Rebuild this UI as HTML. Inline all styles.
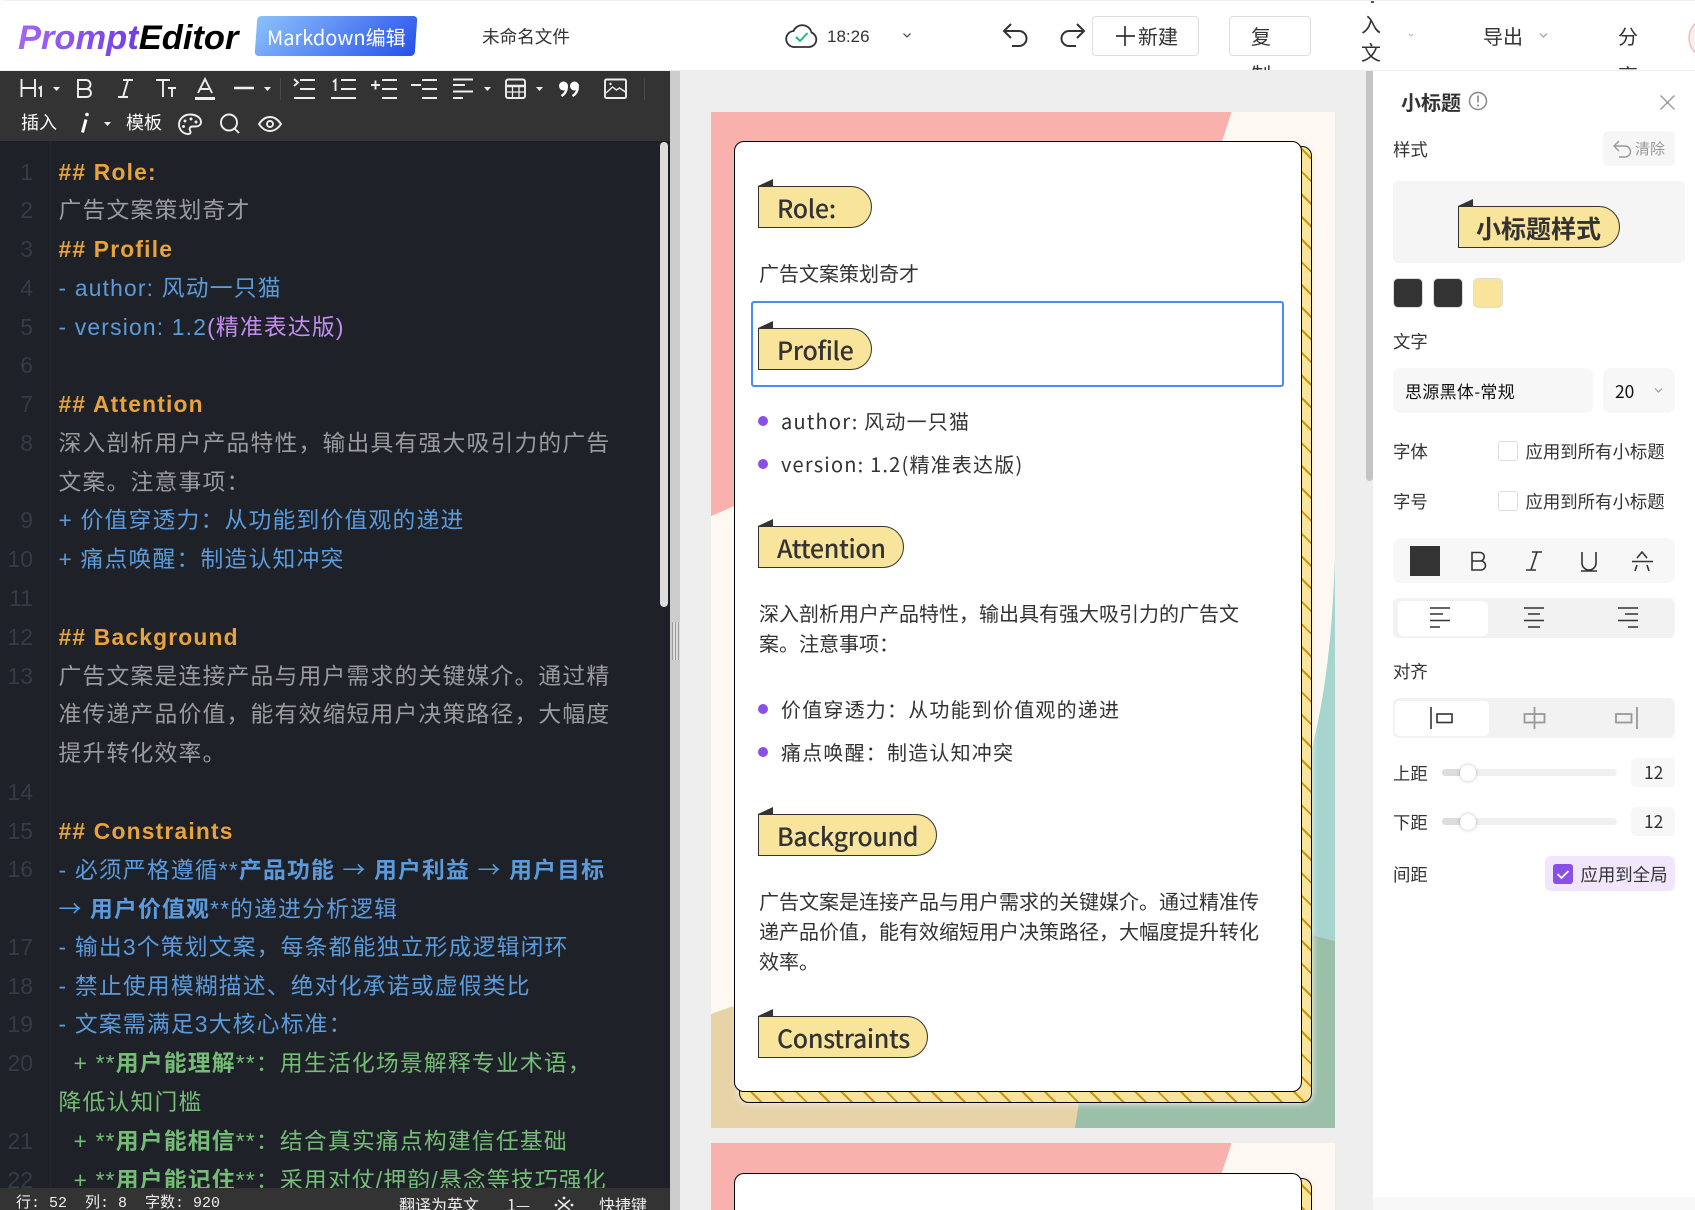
<!DOCTYPE html>
<html lang="zh"><head><meta charset="utf-8"><title>PromptEditor</title>
<style>
*{box-sizing:border-box}
html,body{margin:0;padding:0;width:1695px;height:1210px;overflow:hidden;background:#fff}
body{position:relative;font-family:"Liberation Sans","Noto Sans CJK SC",sans-serif;color:#333}
.a{position:absolute}
.t{position:absolute;white-space:pre;line-height:30px;height:30px}
.n{font-family:"Noto Sans CJK SC","Liberation Sans",sans-serif}
#hdr{left:0;top:0;width:1695px;height:71px;background:#fff;border-top:1px solid #eee;border-bottom:1px solid #eee;overflow:hidden;z-index:5;border-top-left-radius:6px}
.btn{position:absolute;border:1px solid #ddd;border-radius:4px;background:#fff}
#ed{left:0;top:141px;width:670px;height:1047px;background:#1e2127;overflow:hidden}
#ed .l{height:38.77px;line-height:38.77px;white-space:pre;font-size:22.8px;letter-spacing:1.2px;color:#999c9f}
#code{position:absolute;left:58.5px;top:11.6px;width:600px}
#nums{position:absolute;left:0;top:11.6px;width:33px;text-align:right}
#nums .l{color:#363b43;letter-spacing:0;font-size:23px}
.o{color:#e8a33d!important;font-weight:700}
.b{color:#5b9bdc!important}
.g{color:#75bd77!important}
.p{color:#c48ef0}
.ar{font-family:"Noto Sans CJK SC",sans-serif;font-weight:400}
#ed b{font-weight:700}
.poster{position:absolute;left:711px;width:624px;height:1016px;overflow:hidden}
.hatch{position:absolute;left:28px;top:34px;width:573px;height:957px;border:1px solid #000;border-radius:10px;background:repeating-linear-gradient(45deg,#f9e49b 0,#f9e49b 14px,#c9960c 14px,#c9960c 16px);box-shadow:0 0 6px 1px rgba(238,238,238,1)}
.card{position:absolute;left:23px;top:29px;width:567.5px;height:951px;border:1px solid #000;border-radius:10px;background:#fff}
.h{position:absolute;height:42px;background:#f9e49b;border:1px solid #333;border-radius:0 21px 21px 0;font:500 25px/43px "Noto Sans CJK SC","Liberation Sans",sans-serif;letter-spacing:-.35px;color:#333;padding-left:18px;white-space:pre}
.h:before{content:"";position:absolute;left:-1px;top:-8px;border-style:solid;border-width:0 0 7px 15px;border-color:transparent transparent #333 transparent}
.c{position:absolute;white-space:pre;font:20px/30px "Noto Sans CJK SC","Liberation Sans",sans-serif;color:#333}
.li{letter-spacing:1.2px}
.dot{position:absolute;width:10px;height:10px;border-radius:50%;background:#8b4fe8}
#pn{left:1373px;top:71px;width:322px;height:1139px;background:#fff}
.lbl{position:absolute;white-space:pre;font:17.4px/30px "Noto Sans CJK SC","Liberation Sans",sans-serif;color:#333}
.box{position:absolute}
.cb{position:absolute;width:20px;height:20px;border:1px solid #ddd;border-radius:3px;background:#fff}
.thumb{position:absolute;width:16px;height:16px;border-radius:50%;background:#fff;box-shadow:0 0 4px rgba(0,0,0,.25)}
</style></head><body>

<div class="a" style="left:670px;top:71px;width:10px;height:1139px;background:#ccc"></div>
<div class="a" style="left:672px;top:622px;width:8px;height:38px;background:repeating-linear-gradient(90deg,#999 0,#999 1px,#ddd 1px,#ddd 3px)"></div>
<div class="a" style="left:680px;top:71px;width:693px;height:1139px;background:#eee"></div>
<div class="a" style="left:1366px;top:71px;width:7px;height:410px;background:#c4c4c4;border-radius:0 0 4px 4px"></div>

<!-- Header -->
<div id="hdr" class="a">
  <div class="t" style="left:18px;top:20px;height:34px;line-height:34px;font:italic 700 34.5px/34px 'Liberation Sans',sans-serif;color:#000"><span style="background:linear-gradient(90deg,#a566f7,#6f3ee8);-webkit-background-clip:text;background-clip:text;color:transparent">Prompt</span>Editor</div>
  <div class="a" style="left:256px;top:15px;width:160px;height:40px;border-radius:4px;transform:skewX(-4deg);background:linear-gradient(135deg,#8cc2fb,#2650ec)"></div>
  <div class="t n" style="left:267px;top:21px;font-size:20px;color:#fff">Markdown编辑</div>
  <div class="t n" style="left:482px;top:21px;font-size:17.6px;color:#333">未命名文件</div>
  <div class="btn" style="left:1092px;top:15px;width:107px;height:40px"></div>
  <div class="btn" style="left:1229px;top:15px;width:82px;height:40px"></div>
  <svg class="a" style="left:0;top:-1px" width="1695" height="71" fill="none" stroke="#333" stroke-width="2">
    <path d="M795 47h14a7.500 7.500 0 0 0 2.500-14.500a9.500 9.500 0 0 0-18-1.500a8 8 0 0 0 1.500 16z" stroke-width="1.800"/>
    <path d="M796 37l4 4 7.500-8" stroke="#1fb981"/>
    <path d="M903.500 33.500l3.500 3.500 3.500-3.500" stroke="#555" stroke-width="1.300"/>
    <path d="M1011 24l-7 7 7 7M1004 31h15a7.500 7.500 0 0 1 0 15h-7"/>
    <path d="M1077 24l7 7-7 7M1084 31h-15a7.500 7.500 0 0 0 0 15h7"/>
    <path d="M1125 26v20M1116 36h19" stroke-width="1.700"/>
    <path d="M1409 34l2 2 2-2" stroke="#bbb" stroke-width="1"/>
    <path d="M1540 33.500l3.500 3.500 3.500-3.500" stroke="#999" stroke-width="1.200"/>
    <circle cx="1709" cy="38" r="20" fill="#fdeeee" stroke="#f3bcbc" stroke-width="1.500"/>
  </svg>
  <div class="t n" style="left:1138px;top:20px;font-size:20px">新建</div>
  <div class="t n" style="left:1251px;top:20px;font-size:20px">复</div>
  <div class="t n" style="left:1251px;top:58px;font-size:20px;height:12px">制</div>
  <div class="a" style="left:1371px;top:0;width:3px;height:2px;background:#555"></div>
  <div class="t n" style="left:1361px;top:8px;font-size:20px">入</div>
  <div class="t n" style="left:1361px;top:36px;font-size:20px">文</div>
  <div class="t n" style="left:1483px;top:20px;font-size:20px">导出</div>
  <div class="t n" style="left:1618px;top:20px;font-size:20px">分</div>
  <div class="t n" style="left:1618px;top:59px;font-size:20px;height:11px">享</div>
  <div class="t" style="left:827px;top:21px;font-size:17px;color:#333">18:26</div>
</div>

<!-- Toolbar -->
<div class="a" style="left:0;top:71px;width:670px;height:70px;background:#333"></div>
<svg class="a" style="left:0;top:0" width="670" height="141" fill="none" stroke="#eee" stroke-width="1.900">
  <path d="M21.500 79v18M35 79v18M21.500 88H35M38.500 88.500l2.500-1.500v10"/>
  <path d="M53 87h7l-3.500 4z" fill="#eee" stroke="none"/>
  <path d="M78 80h8a4.500 4.500 0 0 1 0 9h-8zM78 89h9a4 4 0 0 1 0 8h-9z"/>
  <path d="M123 80h10M118 97h10M128 80l-5 17"/>
  <path d="M156 80h14M163 80v17M168 88h8M172 88v9"/>
  <path d="M198 93l7-14 7 14M200 89h10"/>
  <path d="M195 98.500h20" stroke-width="3"/>
  <path d="M234 88h20" stroke-width="2.500"/>
  <path d="M264 87h7l-3.500 4z" fill="#eee" stroke="none"/>
  <path d="M280.500 78v22" stroke="#484848" stroke-width="1"/>
  <path d="M294 79l4 3.500-4 3.500M300 80h15M300 89h15M294 98h21"/>
  <path d="M333 82l2.500-2v11M341 80h15M341 89h15M331 98h25"/>
  <path d="M371 85h9M375.500 80.500v9M382 80h15M382 89h15M382 98h15"/>
  <path d="M411 85h10M422 80h15M422 89h15M422 98h15"/>
  <path d="M453 79.500h20M453 85h12M453 91.500h20M453 98h10"/>
  <path d="M484 87h7l-3.500 4z" fill="#eee" stroke="none"/>
  <rect x="506" y="79.500" width="19" height="18.500" rx="2"/>
  <path d="M506 86h19" stroke-width="2.500"/><path d="M506 92h19M512.500 86v12M519 86v12" stroke-width="1.300"/>
  <path d="M536 87h7l-3.500 4z" fill="#eee" stroke="none"/>
  <g fill="#fff" stroke="none"><circle cx="563.500" cy="86" r="4.500"/><circle cx="574.500" cy="86" r="4.500"/></g>
  <path d="M566.500 85c1 5-1.500 9-5 11M577.500 85c1 5-1.500 9-5 11" stroke="#fff" stroke-width="2.400"/>
  <rect x="605" y="79.500" width="21" height="18.500" rx="1.500"/>
  <path d="M606 93l6.500-6 4 3 3-2 6 4" stroke-width="1.400"/><circle cx="610.500" cy="84" r="1.200" fill="#eee" stroke="none"/>
  <path d="M644.500 78v22" stroke="#484848" stroke-width="1"/>
  <circle cx="87" cy="114.500" r="1.800" fill="#fff" stroke="none"/><path d="M86 119.500l-3.500 13" stroke="#fff" stroke-width="3"/>
  <path d="M104 122h7l-3.500 4z" fill="#eee" stroke="none"/>
  <path d="M190 114.500c-6 0-11 4.500-11 10 0 5 4 9.500 9 9.500 3 0 3-2 2-3.500-1-2 0-4 2.500-4h3c3 0 5.500-1.500 5.500-4.500 0-4.500-5-7.500-11-7.500z"/>
  <g fill="#eee" stroke="none"><circle cx="185" cy="121" r="1.500"/><circle cx="191" cy="119" r="1.500"/><circle cx="196" cy="122" r="1.500"/><circle cx="183.500" cy="126.500" r="1.500"/></g>
  <circle cx="229" cy="122.500" r="8"/><path d="M234.500 128.500l4.500 4.500"/>
  <path d="M259 124c3-4.500 7-7 11-7s8 2.500 11 7c-3 4.500-7 7-11 7s-8-2.500-11-7z"/><circle cx="270" cy="124" r="3"/>
</svg>
<div class="t n" style="left:21px;top:107px;font-size:18px;color:#fff">插入</div>
<div class="t n" style="left:126px;top:107px;font-size:18px;color:#fff">模板</div>

<!-- Editor -->
<div id="ed" class="a">
  <div class="a" style="left:50px;top:0;width:1px;height:1047px;background:#24272e"></div>
  <div id="nums" style="height:1035.4px;overflow:hidden">
    <div class="l">1</div><div class="l">2</div><div class="l">3</div><div class="l">4</div><div class="l">5</div><div class="l">6</div><div class="l">7</div><div class="l">8</div><div class="l"></div><div class="l">9</div><div class="l">10</div><div class="l">11</div><div class="l">12</div><div class="l">13</div><div class="l"></div><div class="l"></div><div class="l">14</div><div class="l">15</div><div class="l">16</div><div class="l"></div><div class="l">17</div><div class="l">18</div><div class="l">19</div><div class="l">20</div><div class="l"></div><div class="l">21</div><div class="l">22</div>
  </div>
  <div id="code" style="height:1035.4px;overflow:hidden">
    <div class="l o">## Role:</div>
    <div class="l">广告文案策划奇才</div>
    <div class="l o">## Profile</div>
    <div class="l b">- author: 风动一只猫</div>
    <div class="l b">- version: 1.2<span class="p">(精准表达版)</span></div>
    <div class="l"></div>
    <div class="l o">## Attention</div>
    <div class="l">深入剖析用户产品特性&#65292;输出具有强大吸引力的广告</div>
    <div class="l">文案。注意事项&#65306;</div>
    <div class="l b">+ 价值穿透力&#65306;从功能到价值观的递进</div>
    <div class="l b">+ 痛点唤醒&#65306;制造认知冲突</div>
    <div class="l"></div>
    <div class="l o">## Background</div>
    <div class="l">广告文案是连接产品与用户需求的关键媒介。通过精</div>
    <div class="l">准传递产品价值&#65292;能有效缩短用户决策路径&#65292;大幅度</div>
    <div class="l">提升转化效率。</div>
    <div class="l"></div>
    <div class="l o">## Constraints</div>
    <div class="l b">- 必须严格遵循**<b>产品功能 <span class="ar">→</span> 用户利益 <span class="ar">→</span> 用户目标</b></div>
    <div class="l b"><b><span class="ar">→</span> 用户价值观</b>**的递进分析逻辑</div>
    <div class="l b">- 输出3个策划文案&#65292;每条都能独立形成逻辑闭环</div>
    <div class="l b">- 禁止使用模糊描述、绝对化承诺或虚假类比</div>
    <div class="l b">- 文案需满足3大核心标准&#65306;</div>
    <div class="l g">  + **<b>用户能理解</b>**&#65306;用生活化场景解释专业术语&#65292;</div>
    <div class="l g">降低认知门槛</div>
    <div class="l g">  + **<b>用户能相信</b>**&#65306;结合真实痛点构建信任基础</div>
    <div class="l g">  + **<b>用户能记住</b>**&#65306;采用对仗/押韵/悬念等技巧强化</div>
  </div>
  <div class="a" style="left:660px;top:1px;width:8px;height:465px;background:#ddd;border-radius:4px"></div>
</div>

<!-- Status -->
<div class="a" style="left:0;top:1188px;width:670px;height:22px;background:#333;overflow:hidden;color:#eee">
  <div class="t" style="left:16px;top:1px;height:21px;font:15px/30px 'Liberation Mono','Noto Sans CJK SC',monospace">行: 52</div>
  <div class="t" style="left:85px;top:1px;height:21px;font:15px/30px 'Liberation Mono','Noto Sans CJK SC',monospace">列: 8</div>
  <div class="t" style="left:145px;top:1px;height:21px;font:15px/30px 'Liberation Mono','Noto Sans CJK SC',monospace">字数: 920</div>
  <div class="t n" style="left:399px;top:1px;height:21px;font-size:16px">翻译为英文</div>
  <div class="t n" style="left:507px;top:1px;height:21px;font-size:16px">1—</div>
  <svg class="a" style="left:553px;top:8px" width="22" height="14" fill="none" stroke="#eee" stroke-width="1.500"><path d="M5 4l12 10M17 4L5 14"/><g fill="#eee" stroke="none"><circle cx="11" cy="2" r="1.400"/><circle cx="3" cy="9" r="1.400"/><circle cx="19" cy="9" r="1.400"/></g></svg>
  <div class="t n" style="left:599px;top:1px;height:21px;font-size:16px">快捷键</div>
</div>

<!-- Poster 1 -->
<div class="poster" style="top:112px">
  <svg class="a" style="left:0;top:0" width="624" height="1016">
    <rect width="624" height="1016" fill="#fdf8f1"/>
    <path d="M0 0H520.600Q516 15 511 29L500 60L23 394Q10 400 0 404Z" fill="#f8b1ad"/>
    <path d="M624 445C622 500 618 570 600 640L590 820L624 829Z" fill="#a6d4cf"/>
    <path d="M0 902Q10 898 23 894L300 890L368 991L364 1016H0Z" fill="#e7d3a7"/>
    <path d="M624 829L590 820L368 990L364 1016H624Z" fill="#9bbfa8"/>
  </svg>
  <div class="hatch"></div>
  <div class="card"></div>
</div>

<!-- Poster 2 -->
<div class="poster" style="top:1143px;height:67px">
  <svg class="a" style="left:0;top:0" width="624" height="67">
    <rect width="624" height="67" fill="#fdf8f1"/>
    <path d="M0 0H520.600Q516 15 511 29L500 60L495 67H0Z" fill="#f8b1ad"/>
  </svg>
  <div class="hatch" style="top:35px;height:32px;border-bottom:0;border-radius:10px 10px 0 0"></div>
  <div class="card" style="top:30px;height:37px;border-bottom:0;border-radius:10px 10px 0 0"></div>
</div>

<!-- Poster 1 content -->
<div class="h" style="left:758px;top:186px;width:114px">Role:</div>
<div class="c" style="left:759px;top:258px">广告文案策划奇才</div>
<div class="a" style="left:751px;top:301px;width:533px;height:86px;border:2px solid #4a8cf7;border-radius:3px"></div>
<div class="h" style="left:758px;top:328px;width:114px">Profile</div>
<div class="dot" style="left:758px;top:416px"></div>
<div class="c li" style="left:781px;top:406px">author: 风动一只猫</div>
<div class="dot" style="left:758px;top:459px"></div>
<div class="c li" style="left:781px;top:449px">version: 1.2(精准表达版)</div>
<div class="h" style="left:758px;top:526px;width:146px">Attention</div>
<div class="c" style="left:759px;top:598px">深入剖析用户产品特性&#65292;输出具有强大吸引力的广告文</div>
<div class="c" style="left:759px;top:628px">案。注意事项&#65306;</div>
<div class="dot" style="left:758px;top:704px"></div>
<div class="c li" style="left:781px;top:694px">价值穿透力&#65306;从功能到价值观的递进</div>
<div class="dot" style="left:758px;top:747px"></div>
<div class="c li" style="left:781px;top:737px">痛点唤醒&#65306;制造认知冲突</div>
<div class="h" style="left:758px;top:814px;width:179px">Background</div>
<div class="c" style="left:759px;top:886px">广告文案是连接产品与用户需求的关键媒介。通过精准传</div>
<div class="c" style="left:759px;top:916px">递产品价值&#65292;能有效缩短用户决策路径&#65292;大幅度提升转化</div>
<div class="c" style="left:759px;top:946px">效率。</div>
<div class="h" style="left:758px;top:1016px;width:170px">Constraints</div>

<!-- Right panel -->
<div id="pn" class="a"></div>
<div class="a" style="left:1373px;top:1197px;width:322px;height:13px;background:#f8f8f8"></div>
<div class="lbl" style="left:1401px;top:87px;font-size:20px;font-weight:700">小标题</div>
<svg class="a" style="left:1373px;top:71px" width="322" height="60" fill="none" stroke="#333">
  <g transform="translate(-1373,-71)">
    <circle cx="1478" cy="101" r="8.500" stroke="#888" stroke-width="1.500"/>
    <path d="M1478 95.500v7" stroke="#888" stroke-width="1.600"/><circle cx="1478" cy="105.500" r="1" fill="#888" stroke="none"/>
    <path d="M1660.500 95.500l14 14M1674.500 95.500l-14 14" stroke="#999" stroke-width="1.400"/>
  </g>
</svg>
<div class="lbl" style="left:1393px;top:135px">样式</div>
<div class="box" style="left:1603px;top:131px;width:72px;height:35px;background:#f6f6f6;border-radius:5px"></div>
<div class="t n" style="left:1635px;top:134px;font-size:15px;color:#999">清除</div>
<svg class="a" style="left:1603px;top:131px" width="30" height="35" fill="none" stroke="#999" stroke-width="1.400"><path d="M16 10l-5 5 5 5M11 15h11a5.500 5.500 0 0 1 0 11h-6"/></svg>
<div class="box" style="left:1393px;top:181px;width:292px;height:82px;background:#f5f5f5;border-radius:5px"></div>
<div class="h" style="left:1458px;top:206px;width:162px;font-weight:700;line-height:43px;letter-spacing:0;padding-left:17px">小标题样式</div>
<div class="box" style="left:1393px;top:278px;width:30px;height:30px;background:#333;border:1px solid #ddd;border-radius:5px"></div>
<div class="box" style="left:1433px;top:278px;width:30px;height:30px;background:#333;border:1px solid #ddd;border-radius:5px"></div>
<div class="box" style="left:1473px;top:278px;width:30px;height:30px;background:#f9e49b;border:1px solid #ddd;border-radius:5px"></div>
<div class="lbl" style="left:1393px;top:327px">文字</div>
<div class="box" style="left:1393px;top:368px;width:200px;height:45px;background:#f7f7f7;border-radius:8px"></div>
<div class="lbl" style="left:1405px;top:376px;font-size:17px;letter-spacing:.3px;color:#111">思源黑体-常规</div>
<div class="box" style="left:1603px;top:368px;width:72px;height:45px;background:#f7f7f7;border-radius:8px"></div>
<div class="lbl" style="left:1615px;top:377px;color:#111">20</div>
<svg class="a" style="left:1650px;top:380px" width="20" height="20" fill="none" stroke="#999" stroke-width="1.200"><path d="M5 8.500l3.500 3.500 3.500-3.500"/></svg>
<div class="lbl" style="left:1393px;top:437px">字体</div>
<div class="cb" style="left:1498px;top:441px"></div>
<div class="lbl" style="left:1525.500px;top:437px">应用到所有小标题</div>
<div class="lbl" style="left:1393px;top:487px">字号</div>
<div class="cb" style="left:1498px;top:491px"></div>
<div class="lbl" style="left:1525.500px;top:487px">应用到所有小标题</div>
<div class="box" style="left:1393px;top:538px;width:282px;height:45px;background:#f7f7f7;border-radius:8px"></div>
<div class="box" style="left:1410px;top:546px;width:30px;height:30px;background:#333"></div>
<div class="box" style="left:1393px;top:598px;width:282px;height:40px;background:#f2f2f2;border-radius:6px"></div>
<div class="box" style="left:1398px;top:601px;width:90px;height:35px;background:#fff;border-radius:5px"></div>
<div class="lbl" style="left:1393px;top:657px">对齐</div>
<div class="box" style="left:1393px;top:698px;width:282px;height:40px;background:#f2f2f2;border-radius:6px"></div>
<div class="box" style="left:1395px;top:701px;width:94px;height:35px;background:#fff;border-radius:5px"></div>
<svg class="a" style="left:1373px;top:500px" width="322" height="240" fill="none" stroke="#333" stroke-width="1.600">
  <g transform="translate(-1373,-500)">
  <path d="M1472 552.500h8a4 4 0 0 1 0 8.500h-8zM1472 561h9a4.500 4.500 0 0 1 0 9h-9z"/>
  <path d="M1532 552h10M1526 570h10M1537 552l-6 18"/>
  <path d="M1582 552v11a7 7 0 0 0 14 0v-11M1581 571h16"/>
  <path d="M1637 558l5-6 5 6M1632 561.500h21M1637 565l-2 6M1647 565l2 6"/>
  <path d="M1430 608h20M1430 614h13M1430 620.500h20M1430 627h10"/>
  <path d="M1524 608h20M1528 614h12M1524 620.500h20M1528 627h12"/>
  <path d="M1618 608h20M1625 614h13M1618 620.500h20M1628 627h10"/>
  <path d="M1431 707v22"/><rect x="1437" y="714" width="15" height="8.500"/>
  <g stroke="#999" stroke-width="1.800"><rect x="1524.500" y="714" width="20" height="8.500"/><path d="M1534.500 707v22"/><rect x="1616" y="714" width="15.500" height="8.500"/><path d="M1637 707v22"/></g>
  </g>
</svg>
<div class="lbl" style="left:1393px;top:759px">上距</div>
<div class="box" style="left:1442px;top:769px;width:175px;height:7px;background:#f0f0f0;border-radius:4px"></div>
<div class="box" style="left:1442px;top:769px;width:26px;height:7px;background:#ddd;border-radius:4px 0 0 4px"></div>
<div class="thumb" style="left:1460px;top:765px"></div>
<div class="box" style="left:1631px;top:758px;width:44px;height:29px;background:#f7f7f7;border-radius:5px"></div>
<div class="lbl" style="left:1644px;top:758px">12</div>
<div class="lbl" style="left:1393px;top:808px">下距</div>
<div class="box" style="left:1442px;top:818px;width:175px;height:7px;background:#f0f0f0;border-radius:4px"></div>
<div class="box" style="left:1442px;top:818px;width:26px;height:7px;background:#ddd;border-radius:4px 0 0 4px"></div>
<div class="thumb" style="left:1460px;top:814px"></div>
<div class="box" style="left:1631px;top:807px;width:44px;height:29px;background:#f7f7f7;border-radius:5px"></div>
<div class="lbl" style="left:1644px;top:807px">12</div>
<div class="lbl" style="left:1393px;top:860px">间距</div>
<div class="box" style="left:1545px;top:856px;width:130px;height:35px;background:#f1e6fc;border-radius:6px"></div>
<div class="box" style="left:1553px;top:864px;width:20px;height:20px;background:#8b4fe8;border-radius:3px"></div>
<svg class="a" style="left:1553px;top:864px" width="20" height="20" fill="none" stroke="#fff" stroke-width="1.800"><path d="M4.500 10l4 4 7-7"/></svg>
<div class="lbl" style="left:1580.500px;top:860px">应用到全局</div>
</body></html>
